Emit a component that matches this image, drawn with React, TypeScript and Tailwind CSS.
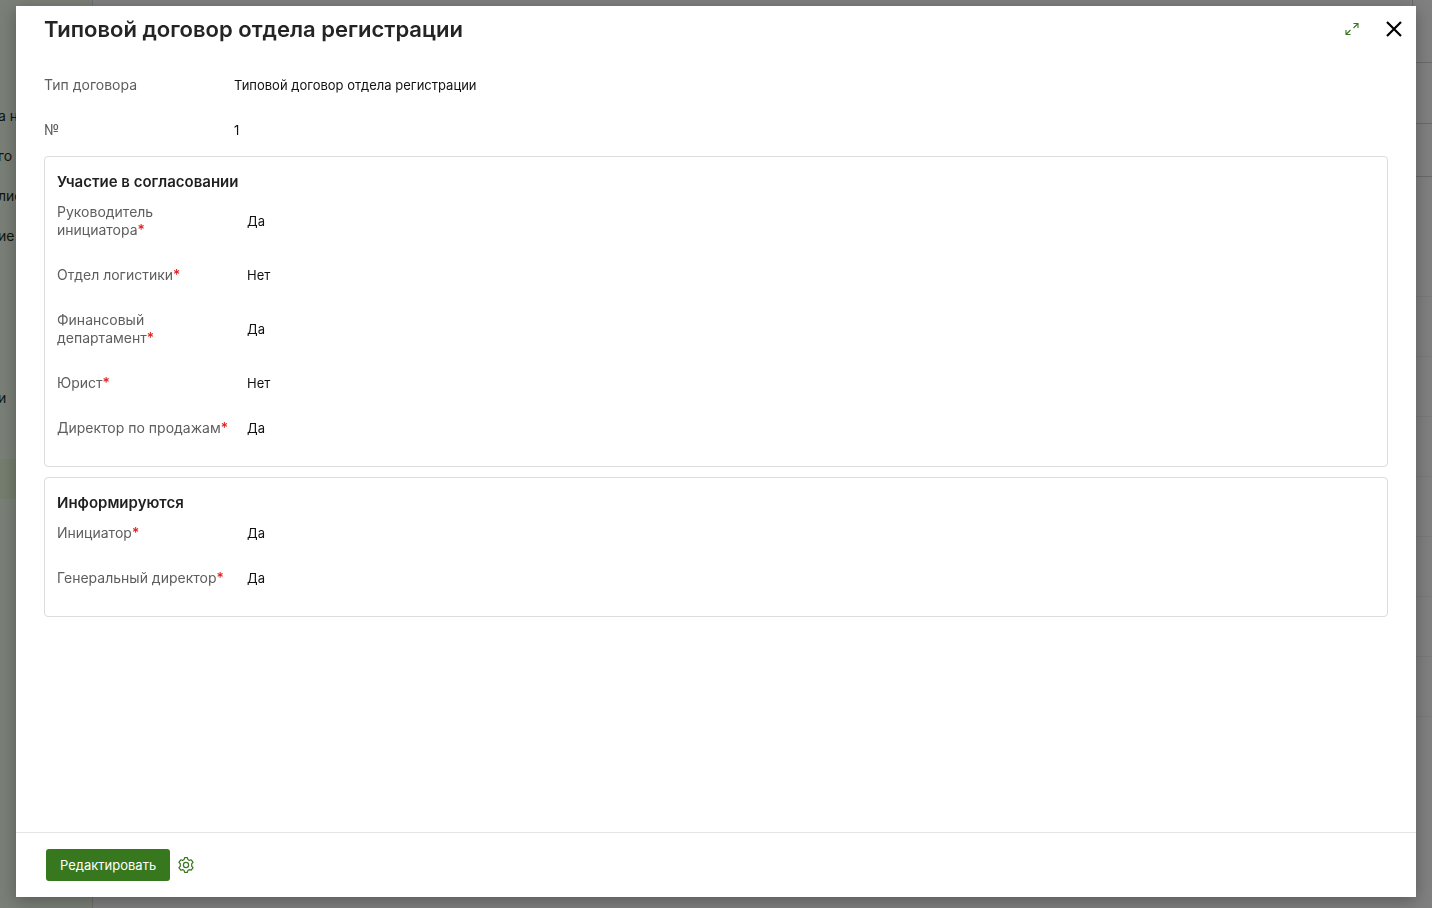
import type { ReactNode } from 'react';

interface Field {
  label: string;
  value: string;
  required?: boolean;
}

const mainFields: Field[] = [
  { label: 'Тип договора', value: 'Типовой договор отдела регистрации' },
  { label: '№', value: '1' },
];

const approvalFields: Field[] = [
  { label: 'Руководитель инициатора', value: 'Да', required: true },
  { label: 'Отдел логистики', value: 'Нет', required: true },
  { label: 'Финансовый департамент', value: 'Да', required: true },
  { label: 'Юрист', value: 'Нет', required: true },
  { label: 'Директор по продажам', value: 'Да', required: true },
];

const informedFields: Field[] = [
  { label: 'Инициатор', value: 'Да', required: true },
  { label: 'Генеральный директор', value: 'Да', required: true },
];

const FieldList = ({ fields }: { fields: Field[] }) => (
  <dl className="flex flex-col gap-[27px]">
    {fields.map(field => (
      <div key={field.label} className="flex items-center">
        <dt className="w-[190px] shrink-0 pr-3 text-[#5e5e5e]">
          {field.label}
          {field.required && <span className="font-medium text-[#e02020]">*</span>}
        </dt>
        <dd className="text-[13px] text-[#111]">{field.value}</dd>
      </div>
    ))}
  </dl>
);

const Section = ({ title, children }: { title: string; children: ReactNode }) => (
  <section className="rounded border border-[#dcdcdc] px-3 pt-[15px] pb-[29px]">
    <h2 className="mb-[11px] text-[15px] leading-5 font-semibold text-[#1f1f1f]">{title}</h2>
    {children}
  </section>
);

// Dimmed page that stays visible around the dialog
const Backdrop = () => (
  <div aria-hidden="true" className="flex min-h-screen bg-[#808080] text-sm text-[#10160d]">
    <div className="w-[93px] shrink-0 overflow-hidden border-r border-[#6f6f6f] bg-[#7a8078] pt-24 whitespace-nowrap">
      <div className="-ml-0.5">
        <div className="h-10 leading-10">а н</div>
        <div className="h-10 leading-10">го</div>
        <div className="h-10 leading-10">лис</div>
        <div className="h-10 leading-10">ие</div>
        <div className="mt-[122px] h-10 leading-10">и</div>
      </div>
      <div className="mt-[41px] h-10 bg-[#757e6f]" />
    </div>
    <div className="flex-1">
      <div className="flex h-[63px] justify-end border-b border-[#6a6a6a]">
        <div className="w-5 border-l border-[#6a6a6a]" />
      </div>
      <div className="h-[61px] border-b border-[#6a6a6a]" />
      <div className="h-[53px] border-b border-[#6a6a6a]" />
      <div className="h-[120px] border-b border-[#797979]" />
      {Array.from({ length: 7 }).map((_, i) => (
        <div key={i} className="h-[60px] border-b border-[#797979]" />
      ))}
    </div>
  </div>
);

const ExpandIcon = () => (
  <svg width="14" height="14" viewBox="0 0 14 14" fill="none" stroke="currentColor" strokeWidth="1.1">
    <path d="M8.5 1.5h4.5v4.5M13 1.5 8.5 6M5.5 12.5H1V8M1 12.5 5.5 8" />
  </svg>
);

const CloseIcon = () => (
  <svg width="16" height="16" viewBox="0 0 16 16" fill="none" stroke="currentColor" strokeWidth="2.2">
    <path d="m1 1 14 14M15 1 1 15" />
  </svg>
);

const GearIcon = () => (
  <svg width="16" height="16" viewBox="0 0 16 16" fill="none" stroke="currentColor" strokeWidth="1.2" strokeLinejoin="round">
    <path d="M6.6.7h2.8l.5 1.9 1.4.8 1.9-.6 1.9 2.6-1.4 1.3v2.6l1.4 1.3-1.9 2.6-1.9-.6-1.4.8-.5 1.9H6.6l-.5-1.9-1.4-.8-1.9.6L.9 10.6l1.4-1.3V6.7L.9 5.4l1.9-2.6 1.9.6 1.4-.8z" />
    <circle cx="8" cy="8" r="2.6" />
  </svg>
);

export default function App() {
  return (
    <div className="font-['Inter','Liberation_Sans',sans-serif] text-sm leading-[18px]">
      <Backdrop />
      <div
        role="dialog"
        aria-labelledby="dialog-title"
        className="fixed inset-x-4 top-1.5 bottom-[11px] flex flex-col bg-white shadow-[0_4px_16px_rgba(0,0,0,0.3)]"
      >
        <header className="flex h-[46px] items-center justify-between pr-3.5 pl-7">
          <h1 id="dialog-title" className="text-[22px] leading-8 font-semibold text-[#242424]">
            Типовой договор отдела регистрации
          </h1>
          <div className="flex items-center gap-[27px]">
            <button type="button" aria-label="Развернуть" className="text-[#37771e]">
              <ExpandIcon />
            </button>
            <button type="button" aria-label="Закрыть" className="text-black">
              <CloseIcon />
            </button>
          </div>
        </header>

        <main className="min-h-0 flex-1 overflow-auto px-7 pt-6">
          <FieldList fields={mainFields} />
          <div className="mt-[17px] flex flex-col gap-2.5">
            <Section title="Участие в согласовании">
              <FieldList fields={approvalFields} />
            </Section>
            <Section title="Информируются">
              <FieldList fields={informedFields} />
            </Section>
          </div>
        </main>

        <footer className="flex items-center gap-2 border-t border-[#e4e4e4] px-[30px] py-4">
          <button type="button" className="h-8 rounded-[3px] bg-[#37771e] px-3.5 text-[13px] text-white">
            Редактировать
          </button>
          <button type="button" aria-label="Настройки" className="text-[#37771e]">
            <GearIcon />
          </button>
        </footer>
      </div>
    </div>
  );
}
